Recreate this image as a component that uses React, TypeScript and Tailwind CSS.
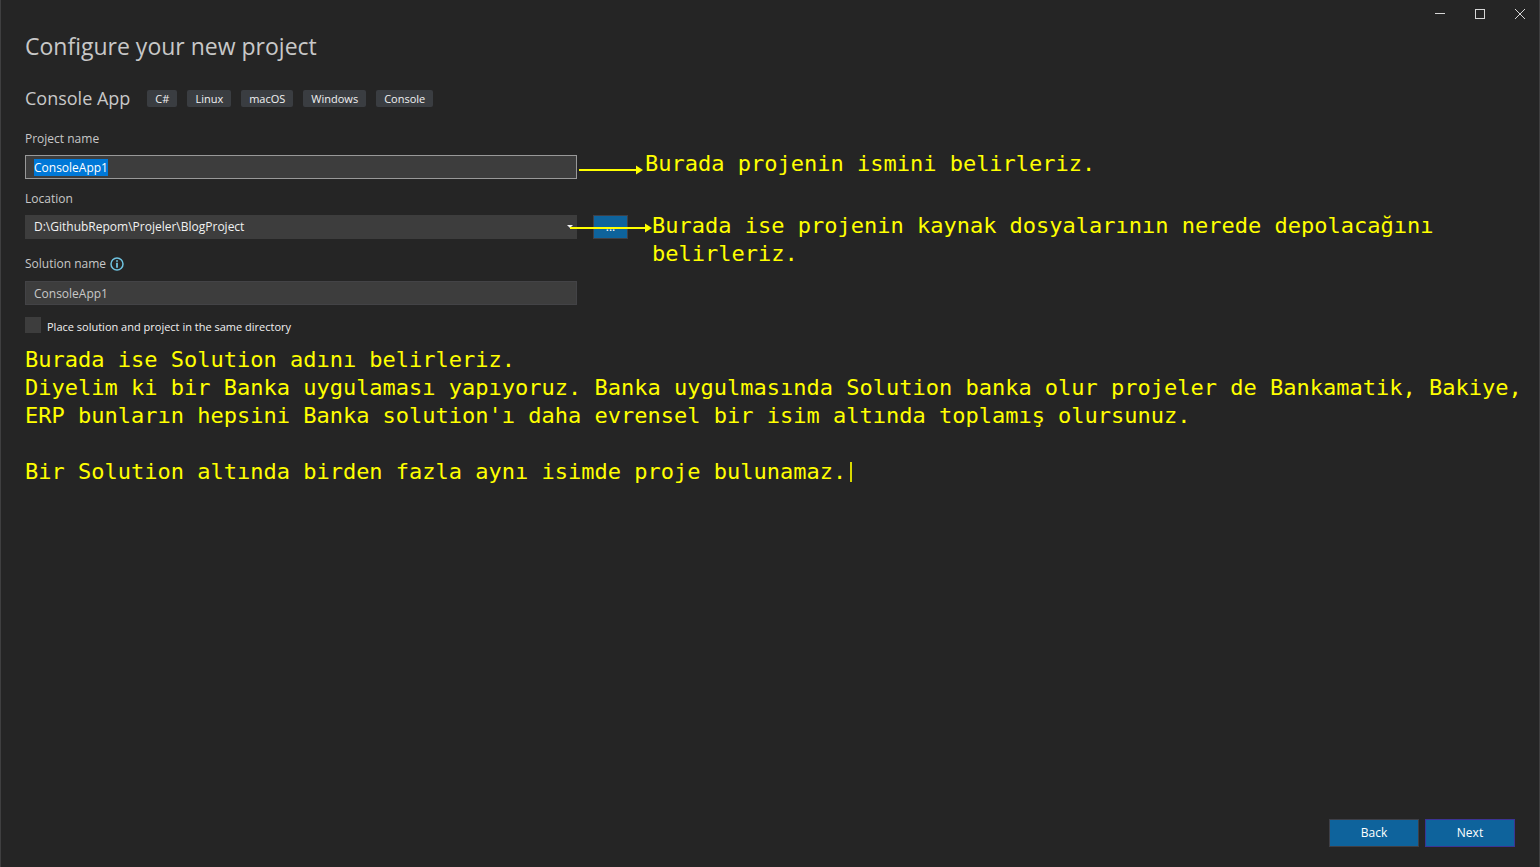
import { useEffect, useRef } from "react";

const TAGS = ["C#", "Linux", "macOS", "Windows", "Console"];

const LOCATION = "D:\\GithubRepom\\Projeler\\BlogProject";

const NOTE = "font-['DejaVu_Sans_Mono',monospace] text-[22px] leading-7 text-[#ffff00]";

function WindowControls() {
  return (
    <header className="-mr-px flex h-7 justify-end text-[#d6d6d6]">
      <button type="button" aria-label="Minimize" className="flex w-10 items-center justify-center">
        <svg width="10" height="10" viewBox="0 0 10 10" shapeRendering="crispEdges">
          <path d="M0 4h10v1H0z" fill="currentColor" />
        </svg>
      </button>
      <button type="button" aria-label="Maximize" className="flex w-10 items-center justify-center">
        <svg width="10" height="10" viewBox="0 0 10 10" shapeRendering="crispEdges">
          <path d="M.5 .5h9v9h-9z" fill="none" stroke="currentColor" />
        </svg>
      </button>
      <button type="button" aria-label="Close" className="flex w-10 items-center justify-center">
        <svg width="10" height="10" viewBox="0 0 10 10">
          <path d="M0 0l10 10M10 0L0 10" fill="none" stroke="currentColor" />
        </svg>
      </button>
    </header>
  );
}

function ShortArrow() {
  return (
    <svg width="64" height="10" viewBox="0 0 64 10" className="shrink-0" aria-hidden="true">
      <path d="M0 5h60" stroke="#ffff00" strokeWidth="2" />
      <path d="M57 .5l7 4.5-7 4.5z" fill="#ffff00" />
    </svg>
  );
}

function LongArrow() {
  return (
    <svg width="82" height="10" viewBox="0 0 82 10" className="shrink-0" aria-hidden="true">
      <path d="M0 5h78" stroke="#ffff00" strokeWidth="2" />
      <path d="M75 .5l7 4.5-7 4.5z" fill="#ffff00" />
    </svg>
  );
}

function InfoIcon() {
  return (
    <svg width="14" height="14" viewBox="0 0 14 14" aria-hidden="true">
      <circle cx="7" cy="7" r="6" fill="none" stroke="#6fc3e0" strokeWidth="1.5" />
      <path d="M6.1 3.2h1.8v1.6H6.1zM6.1 5.8h1.8v5H6.1z" fill="#6fc3e0" />
    </svg>
  );
}

export default function App() {
  const nameRef = useRef<HTMLInputElement>(null);

  useEffect(() => {
    nameRef.current?.focus();
    nameRef.current?.select();
  }, []);

  return (
    <div className="flex min-h-screen flex-col border-x border-[#3f3f40] bg-[#252525] font-['Open_Sans',sans-serif] text-xs text-[#c8c8c8]">
      <WindowControls />

      <main className="flex-1 pr-3 pl-6">
        <h1 className="mt-0.5 text-[23px] leading-8">Configure your new project</h1>

        <div className="mt-[22px] flex h-7 items-center gap-[17px]">
          <h2 className="text-lg leading-7">Console App</h2>
          <ul className="flex gap-2.5">
            {TAGS.map((tag) => (
              <li key={tag} className="rounded-xs bg-[#3a3d41] px-2 text-[11px] leading-[17px] text-[#f1f1f1]">
                {tag}
              </li>
            ))}
          </ul>
        </div>

        <form id="project-form" onSubmit={(e) => e.preventDefault()}>
          <label htmlFor="project-name" className="mt-[19px] block leading-4">
            Project name
          </label>
          <div className="relative mt-2 w-[552px]">
            <input
              ref={nameRef}
              id="project-name"
              type="text"
              defaultValue="ConsoleApp1"
              className="block h-6 w-full border border-[#999999] bg-[#3d3d3d] px-2 leading-4 text-[#f1f1f1] outline-none selection:bg-[#0078d7] selection:text-white"
            />
            <div className="absolute -top-[5px] left-full ml-0.5 flex items-start gap-0.5 whitespace-nowrap">
              <span className="mt-[15px]">
                <ShortArrow />
              </span>
              <p className={NOTE}>Burada projenin ismini belirleriz.</p>
            </div>
          </div>

          <label htmlFor="location" className="mt-3 block leading-4">
            Location
          </label>
          <div className="relative mt-2 flex w-[603px] gap-4">
            <div className="relative w-[552px]">
              <select
                id="location"
                className="block h-6 w-full appearance-none bg-[#3d3d3d] px-[9px] text-[#f1f1f1] outline-none"
              >
                <option>{LOCATION}</option>
              </select>
              <svg width="6" height="3" viewBox="0 0 6 3" className="pointer-events-none absolute top-2.5 right-1" aria-hidden="true">
                <path d="M0 0h6L3 3z" fill="#f1f1f1" />
              </svg>
            </div>
            <button
              type="button"
              aria-label="Browse"
              className="h-6 w-[35px] border border-[#3f3f46] bg-[#0e639c] leading-4 text-white"
            >
              ...
            </button>
            <div className="pointer-events-none absolute -top-[3px] left-[545px] flex items-start whitespace-nowrap">
              <span className="mt-[11px]">
                <LongArrow />
              </span>
              <p className={NOTE}>
                Burada ise projenin kaynak dosyalarının nerede depolacağını
                <br />
                belirleriz.
              </p>
            </div>
          </div>

          <div className="mt-[17px] flex items-center gap-1">
            <label htmlFor="solution-name" className="leading-4">
              Solution name
            </label>
            <InfoIcon />
          </div>
          <input
            id="solution-name"
            type="text"
            defaultValue="ConsoleApp1"
            className="mt-[9px] block h-6 w-[552px] border border-[#434346] bg-[#3d3d3d] px-2 leading-4 text-[#c8c8c8] outline-none"
          />

          <label className="mt-3 flex items-start gap-1.5 text-[11px] leading-5 text-[#f1f1f1]">
            <input type="checkbox" className="size-4 appearance-none bg-[#3d3d3d]" />
            Place solution and project in the same directory
          </label>
        </form>

        <div className={`mt-[9px] ${NOTE}`}>
          <p>Burada ise Solution adını belirleriz.</p>
          <p className="mb-7">
            Diyelim ki bir Banka uygulaması yapıyoruz. Banka uygulmasında Solution banka olur projeler de Bankamatik,
            Bakiye, ERP bunların hepsini Banka solution'ı daha evrensel bir isim altında toplamış olursunuz.
          </p>
          <p className="flex items-center">
            Bir Solution altında birden fazla aynı isimde proje bulunamaz.
            <span className="ml-1 h-5 w-0.5 bg-[#d8d800]" />
          </p>
        </div>
      </main>

      <footer className="flex justify-end gap-1.5 px-6 pb-5">
        <button type="button" className="h-7 w-[90px] border border-[#3f3f46] bg-[#0e639c] text-white">
          Back
        </button>
        <button
          type="submit"
          form="project-form"
          className="h-7 w-[90px] border border-[#3c3494] bg-[#0e639c] text-white"
        >
          Next
        </button>
      </footer>
    </div>
  );
}
